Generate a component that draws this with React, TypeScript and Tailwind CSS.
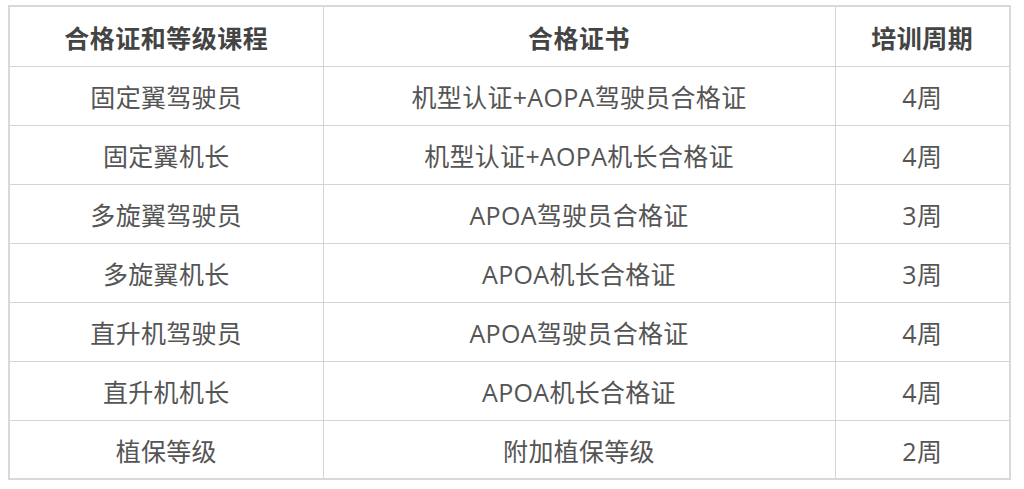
const rows: [string, string, string][] = [
  ["固定翼驾驶员", "机型认证+AOPA驾驶员合格证", "4周"],
  ["固定翼机长", "机型认证+AOPA机长合格证", "4周"],
  ["多旋翼驾驶员", "APOA驾驶员合格证", "3周"],
  ["多旋翼机长", "APOA机长合格证", "3周"],
  ["直升机驾驶员", "APOA驾驶员合格证", "4周"],
  ["直升机机长", "APOA机长合格证", "4周"],
  ["植保等级", "附加植保等级", "2周"],
];

export default function App() {
  return (
    <div
      className="min-h-screen bg-white pl-[8px] pt-[5px]"
      style={{ fontFamily: '"Open Sans", "Noto Sans CJK SC", sans-serif' }}
    >
      <table className="w-[1003px] border-collapse border-2 border-[#d9d9d9] text-[25px] text-[#555]">
        <colgroup>
          <col className="w-[314px]" />
          <col className="w-[512px]" />
          <col />
        </colgroup>
        <thead>
          <tr className="h-[60px]">
            <th className="border border-[#d4d4d4] pt-1 font-bold tracking-[0.5px] text-[#444]">合格证和等级课程</th>
            <th className="border border-[#d4d4d4] pt-1 font-bold tracking-[0.5px] text-[#444]">合格证书</th>
            <th className="border border-[#d4d4d4] pt-1 font-bold tracking-[0.5px] text-[#444]">培训周期</th>
          </tr>
        </thead>
        <tbody>
          {rows.map((r, i) => (
            <tr key={i} className="h-[59px]">
              {r.map((c, j) => (
                <td key={j} className="border border-[#d4d4d4] pt-1 text-center font-normal tracking-[0.3px]">
                  {c}
                </td>
              ))}
            </tr>
          ))}
        </tbody>
      </table>
    </div>
  );
}
